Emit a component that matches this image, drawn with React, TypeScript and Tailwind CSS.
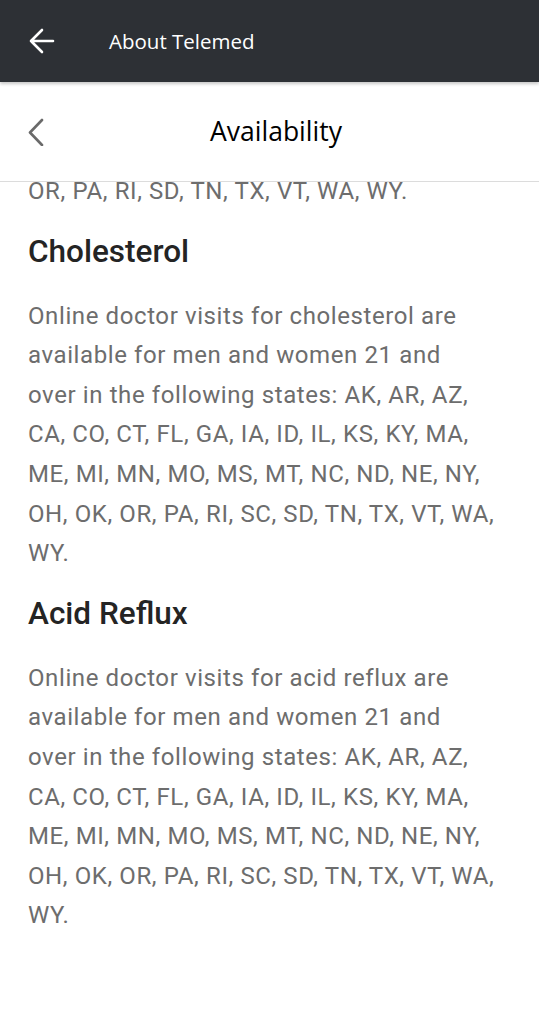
import React from "react";

const prevTail = ["OR, PA, RI, SD, TN, TX, VT, WA, WY."];

const sections: { title: string; lines: string[] }[] = [
  {
    title: "Cholesterol",
    lines: [
      "Online doctor visits for cholesterol are",
      "available for men and women 21 and",
      "over in the following states: AK, AR, AZ,",
      "CA, CO, CT, FL, GA, IA, ID, IL, KS, KY, MA,",
      "ME, MI, MN, MO, MS, MT, NC, ND, NE, NY,",
      "OH, OK, OR, PA, RI, SC, SD, TN, TX, VT, WA,",
      "WY.",
    ],
  },
  {
    title: "Acid Reflux",
    lines: [
      "Online doctor visits for acid reflux are",
      "available for men and women 21 and",
      "over in the following states: AK, AR, AZ,",
      "CA, CO, CT, FL, GA, IA, ID, IL, KS, KY, MA,",
      "ME, MI, MN, MO, MS, MT, NC, ND, NE, NY,",
      "OH, OK, OR, PA, RI, SC, SD, TN, TX, VT, WA,",
      "WY.",
    ],
  },
];

function Para({ lines }: { lines: string[] }) {
  return (
    <div className="text-[24px] leading-[39.6px] tracking-[0.6px] text-[#6d6d6d] font-['Roboto',sans-serif]">
      {lines.map((l, i) => (
        <div key={i} className="whitespace-nowrap">
          {l}
        </div>
      ))}
    </div>
  );
}

export default function App() {
  return (
    <div className="w-[539px] h-[1024px] bg-white overflow-hidden flex flex-col">
      <div className="relative z-10 h-[82px] shrink-0 bg-[#2d3035] flex items-center shadow-[0_2px_3px_rgba(0,0,0,0.22)]">
        <div className="w-[109px] pl-[29px] flex items-center">
          <svg width="26" height="26" viewBox="0 0 26 26" fill="none">
            <path
              d="M2 13H24M13 2L2 13L13 24"
              stroke="white"
              strokeWidth="2.6"
              strokeLinecap="round"
              strokeLinejoin="round"
            />
          </svg>
        </div>
        <span className="text-white text-[20.5px] font-['Open_Sans',sans-serif]">
          About Telemed
        </span>
      </div>
      <div className="h-[100px] shrink-0 bg-white border-b border-[#dcdcdc] flex items-center relative">
        <div className="absolute left-[28px] top-[36px]">
          <svg width="16" height="28" viewBox="0 0 16 28" fill="none">
            <path
              d="M14 2L2 14.5L14 27"
              stroke="#6a6a6a"
              strokeWidth="2.6"
              strokeLinecap="round"
              strokeLinejoin="round"
            />
          </svg>
        </div>
        <div className="flex-1 flex justify-center pl-[13px]">
          <span className="text-black text-[26.5px] font-medium font-['Open_Sans',sans-serif]">
            Availability
          </span>
        </div>
      </div>
      <div className="flex-1 overflow-hidden px-[28px]">
        <div className="-mt-[10px]">
          <Para lines={prevTail} />
          {sections.map((s) => (
            <div key={s.title}>
              <h2 className="mt-[20px] text-[31.5px] leading-[40px] font-medium text-[#242424] font-['Roboto',sans-serif]">
                {s.title}
              </h2>
              <div className="mt-[25px]">
                <Para lines={s.lines} />
              </div>
            </div>
          ))}
        </div>
      </div>
    </div>
  );
}
